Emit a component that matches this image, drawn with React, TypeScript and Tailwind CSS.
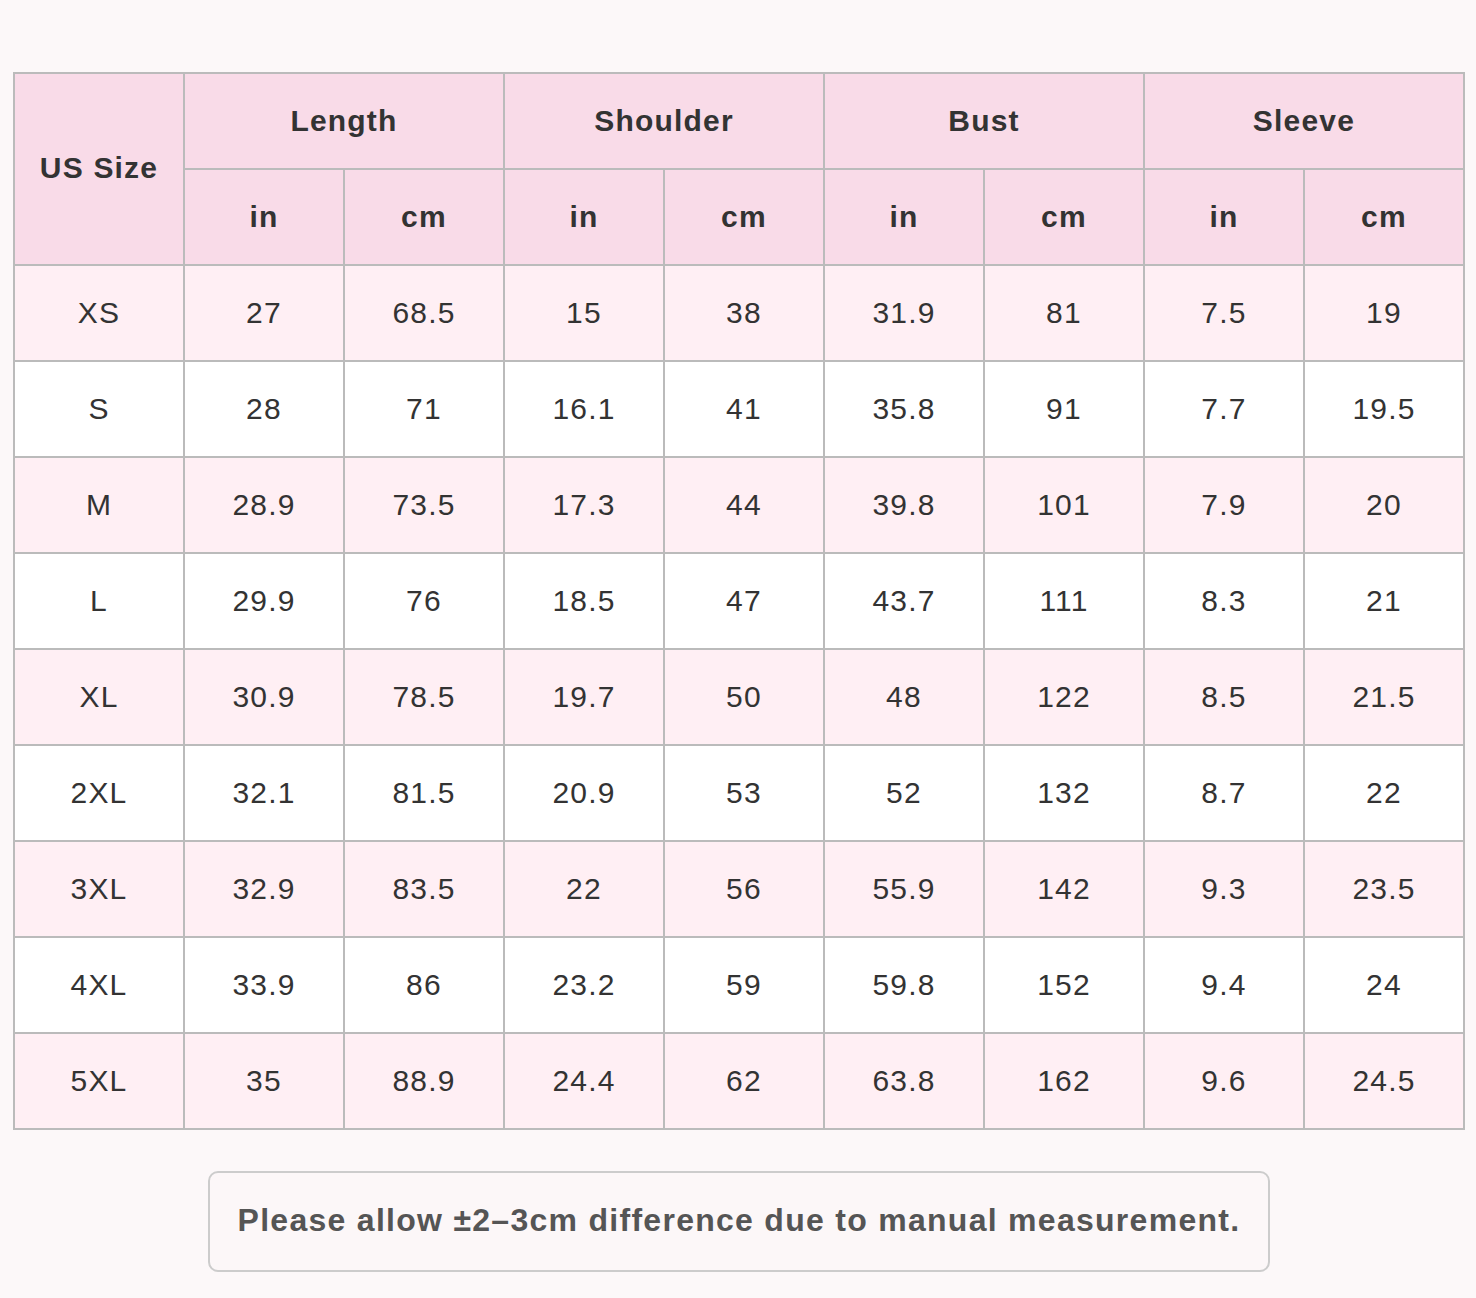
const groups = ['Length', 'Shoulder', 'Bust', 'Sleeve'];

const rows: [string, ...string[]][] = [
  ['XS', '27', '68.5', '15', '38', '31.9', '81', '7.5', '19'],
  ['S', '28', '71', '16.1', '41', '35.8', '91', '7.7', '19.5'],
  ['M', '28.9', '73.5', '17.3', '44', '39.8', '101', '7.9', '20'],
  ['L', '29.9', '76', '18.5', '47', '43.7', '111', '8.3', '21'],
  ['XL', '30.9', '78.5', '19.7', '50', '48', '122', '8.5', '21.5'],
  ['2XL', '32.1', '81.5', '20.9', '53', '52', '132', '8.7', '22'],
  ['3XL', '32.9', '83.5', '22', '56', '55.9', '142', '9.3', '23.5'],
  ['4XL', '33.9', '86', '23.2', '59', '59.8', '152', '9.4', '24'],
  ['5XL', '35', '88.9', '24.4', '62', '63.8', '162', '9.6', '24.5'],
];

const cell = 'border-2 border-[#bbbbbb] pb-[2px] text-center align-middle';

export default function App() {
  return (
    <div className="min-h-[1298px] bg-[#fcf8f9] pt-[72px] font-['Liberation_Sans',Arial,sans-serif] text-[#333333]">
      <div className="flex flex-col items-center pl-[2px]">
        <table className="table-fixed border-collapse text-[30px] tracking-[0.04em]">
          <colgroup>
            <col className="w-[170px]" />
            {Array.from({ length: 8 }).map((_, i) => (
              <col key={i} className="w-[160px]" />
            ))}
          </colgroup>
          <thead className="bg-[#f9dbe8] font-bold">
            <tr className="h-[96px]">
              <th rowSpan={2} className={cell + ' pb-[4px]'}>
                US Size
              </th>
              {groups.map((g) => (
                <th key={g} colSpan={2} className={cell}>
                  {g}
                </th>
              ))}
            </tr>
            <tr className="h-[96px]">
              {groups.map((g) => (
                <>
                  <th key={g + 'in'} className={cell}>
                    in
                  </th>
                  <th key={g + 'cm'} className={cell}>
                    cm
                  </th>
                </>
              ))}
            </tr>
          </thead>
          <tbody>
            {rows.map((r, i) => (
              <tr key={r[0]} className={i % 2 === 0 ? 'h-[96px] bg-[#ffeff4]' : 'h-[96px] bg-white'}>
                {r.map((v, j) => (
                  <td key={j} className={cell}>
                    {v}
                  </td>
                ))}
              </tr>
            ))}
          </tbody>
        </table>

        <div className="mt-[41px] flex h-[101px] w-[1062px] items-center justify-center rounded-[10px] border-2 border-[#cccccc] bg-[#fcf7f8]">
          <p className="mb-[3px] text-[32px] font-bold tracking-[0.04em] text-[#555555]">
            Please allow ±2–3cm difference due to manual measurement.
          </p>
        </div>
      </div>
    </div>
  );
}
